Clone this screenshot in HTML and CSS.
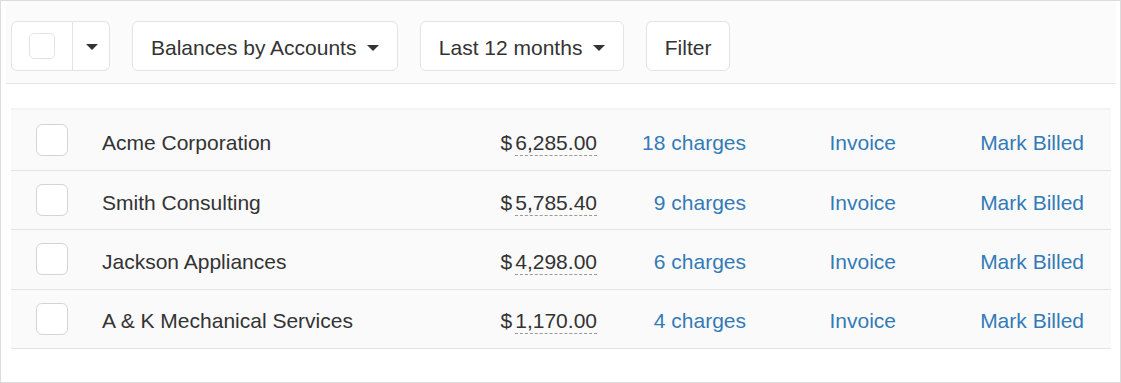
FILE: index.html
```html
<!DOCTYPE html>
<html>
<head>
<meta charset="utf-8">
<link rel="stylesheet" href="styles.css">
</head>
<body>
<div class="frame">
  <div class="toolbar">
    <div class="btn-group">
      <div class="btn btn-check"><span class="box small"></span></div>
      <div class="btn btn-drop"><span class="caret"></span></div>
    </div>
    <div class="btn">Balances by Accounts <span class="caret"></span></div>
    <div class="btn">Last 12 months <span class="caret"></span></div>
    <div class="btn">Filter</div>
  </div>
  <div class="table">
    <div class="row first">
      <div class="c-check"><span class="box"></span></div>
      <div class="c-name">Acme Corporation</div>
      <div class="c-amt">$<span class="num">6,285.00</span></div>
      <div class="c-link"><a>18 charges</a></div>
      <div class="c-link"><a>Invoice</a></div>
      <div class="c-link"><a>Mark Billed</a></div>
    </div>
    <div class="row">
      <div class="c-check"><span class="box"></span></div>
      <div class="c-name">Smith Consulting</div>
      <div class="c-amt">$<span class="num">5,785.40</span></div>
      <div class="c-link"><a>9 charges</a></div>
      <div class="c-link"><a>Invoice</a></div>
      <div class="c-link"><a>Mark Billed</a></div>
    </div>
    <div class="row">
      <div class="c-check"><span class="box"></span></div>
      <div class="c-name">Jackson Appliances</div>
      <div class="c-amt">$<span class="num">4,298.00</span></div>
      <div class="c-link"><a>6 charges</a></div>
      <div class="c-link"><a>Invoice</a></div>
      <div class="c-link"><a>Mark Billed</a></div>
    </div>
    <div class="row">
      <div class="c-check"><span class="box"></span></div>
      <div class="c-name">A &amp; K Mechanical Services</div>
      <div class="c-amt">$<span class="num">1,170.00</span></div>
      <div class="c-link"><a>4 charges</a></div>
      <div class="c-link"><a>Invoice</a></div>
      <div class="c-link"><a>Mark Billed</a></div>
    </div>
  </div>
</div>
</body>
</html>
```
FILE: styles.css
```css
* { box-sizing: border-box; }
html, body { margin: 0; padding: 0; background: #fff; }
body {
  font-family: "Liberation Sans", Arial, sans-serif;
  font-size: 21px;
  line-height: 30px;
  color: #333;
}
.frame {
  width: 1121px;
  height: 383px;
  border: 1px solid #dcdcdc;
  padding: 0 4px 0 5px;
}
.toolbar {
  display: flex;
  gap: 22px;
  padding: 20px 5px 12px 5px;
  background: #fbfbfb;
  border-bottom: 1px solid #e6e6e6;
}
.btn-group { display: flex; }
.btn {
  display: flex;
  align-items: center;
  height: 50px;
  padding: 11px 18px 7px 18px;
  border: 1px solid #e3e3e3;
  border-radius: 6px;
  background: #fff;
  white-space: pre;
}
.btn-check {
  width: 62px;
  justify-content: center;
  padding: 0;
  border-radius: 6px 0 0 6px;
}
.btn-drop {
  width: 37px;
  justify-content: center;
  padding: 0;
  border-left: none;
  border-radius: 0 6px 6px 0;
}
.caret {
  display: inline-block;
  width: 0;
  height: 0;
  border-top: 6px solid #333;
  border-left: 6px solid transparent;
  border-right: 6px solid transparent;
  margin-left: 4.5px;
  margin-top: -1px;
}
.btn-drop .caret { margin-left: 1px; margin-top: 2px; }
.box {
  display: block;
  width: 32px;
  height: 32px;
  border: 1px solid #d4d4d4;
  border-radius: 6px;
  background: #fff;
}
.box.small {
  width: 26px;
  height: 26px;
  border-color: #e3e3e3;
  border-radius: 5px;
}
.table {
  margin: 24px 5px 0 5px;
  background: #fafafa;
  border-top: 2px solid #f3f3f3;
}
.row {
  display: grid;
  grid-template-columns: 91px 1fr 116px 149px 150px 188px;
  align-items: center;
  height: 59.3px;
  padding-right: 27px;
  border-bottom: 1px solid #e4e4e4;
}
.row.first { height: 61px; }
.c-name, .c-amt, .c-link { padding-top: 5px; }
.c-check { padding-left: 25px; }
.c-amt { text-align: right; }
.num {
  margin-left: 3px;
  border-bottom: 1px dashed #999;
  line-height: 24px;
  display: inline-block;
}
.c-link { text-align: right; }
.c-link a { color: #337ab7; text-decoration: none; }
```
